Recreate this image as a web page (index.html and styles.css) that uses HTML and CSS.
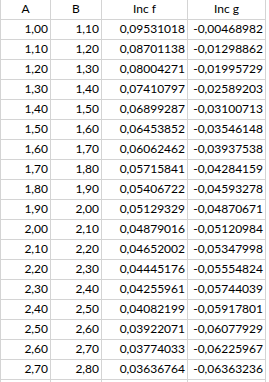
FILE: index.html
```html
<!DOCTYPE html>
<html>
<head>
<meta charset="utf-8">
<link rel="stylesheet" href="styles.css">
</head>
<body>
<div class="sheet">
  <div class="cell head">A</div><div class="cell head">B</div><div class="cell head">Inc f</div><div class="cell head">Inc g</div>
  <div class="cell">1,00</div><div class="cell">1,10</div><div class="cell">0,09531018</div><div class="cell">-0,00468982</div>
  <div class="cell">1,10</div><div class="cell">1,20</div><div class="cell">0,08701138</div><div class="cell">-0,01298862</div>
  <div class="cell">1,20</div><div class="cell">1,30</div><div class="cell">0,08004271</div><div class="cell">-0,01995729</div>
  <div class="cell">1,30</div><div class="cell">1,40</div><div class="cell">0,07410797</div><div class="cell">-0,02589203</div>
  <div class="cell">1,40</div><div class="cell">1,50</div><div class="cell">0,06899287</div><div class="cell">-0,03100713</div>
  <div class="cell">1,50</div><div class="cell">1,60</div><div class="cell">0,06453852</div><div class="cell">-0,03546148</div>
  <div class="cell">1,60</div><div class="cell">1,70</div><div class="cell">0,06062462</div><div class="cell">-0,03937538</div>
  <div class="cell">1,70</div><div class="cell">1,80</div><div class="cell">0,05715841</div><div class="cell">-0,04284159</div>
  <div class="cell">1,80</div><div class="cell">1,90</div><div class="cell">0,05406722</div><div class="cell">-0,04593278</div>
  <div class="cell">1,90</div><div class="cell">2,00</div><div class="cell">0,05129329</div><div class="cell">-0,04870671</div>
  <div class="cell">2,00</div><div class="cell">2,10</div><div class="cell">0,04879016</div><div class="cell">-0,05120984</div>
  <div class="cell">2,10</div><div class="cell">2,20</div><div class="cell">0,04652002</div><div class="cell">-0,05347998</div>
  <div class="cell">2,20</div><div class="cell">2,30</div><div class="cell">0,04445176</div><div class="cell">-0,05554824</div>
  <div class="cell">2,30</div><div class="cell">2,40</div><div class="cell">0,04255961</div><div class="cell">-0,05744039</div>
  <div class="cell">2,40</div><div class="cell">2,50</div><div class="cell">0,04082199</div><div class="cell">-0,05917801</div>
  <div class="cell">2,50</div><div class="cell">2,60</div><div class="cell">0,03922071</div><div class="cell">-0,06077929</div>
  <div class="cell">2,60</div><div class="cell">2,70</div><div class="cell">0,03774033</div><div class="cell">-0,06225967</div>
  <div class="cell">2,70</div><div class="cell">2,80</div><div class="cell">0,03636764</div><div class="cell">-0,06363236</div>
  <div class="cell"></div><div class="cell"></div><div class="cell"></div><div class="cell"></div>
</div>
</body>
</html>
```
FILE: styles.css
```css
html, body {
  margin: 0;
  padding: 0;
  background: #ffffff;
  overflow: hidden;
}
.sheet {
  display: grid;
  grid-template-columns: 50px 51px 86px 78px;
  grid-auto-rows: 20px;
  width: 265px;
  border-left: 1px solid #d4d4d4;
  font-family: "Lato", "Open Sans", sans-serif;
  font-size: 12px;
  color: #000000;
}
.cell {
  box-sizing: border-box;
  border-right: 1px solid #d4d4d4;
  border-bottom: 1px solid #d4d4d4;
  display: flex;
  align-items: flex-end;
  justify-content: flex-end;
  padding: 0 2px 3px 0;
  line-height: 15px;
  white-space: nowrap;
}
.cell.head {
  justify-content: center;
  padding: 0 0 3px 0;
}
```
